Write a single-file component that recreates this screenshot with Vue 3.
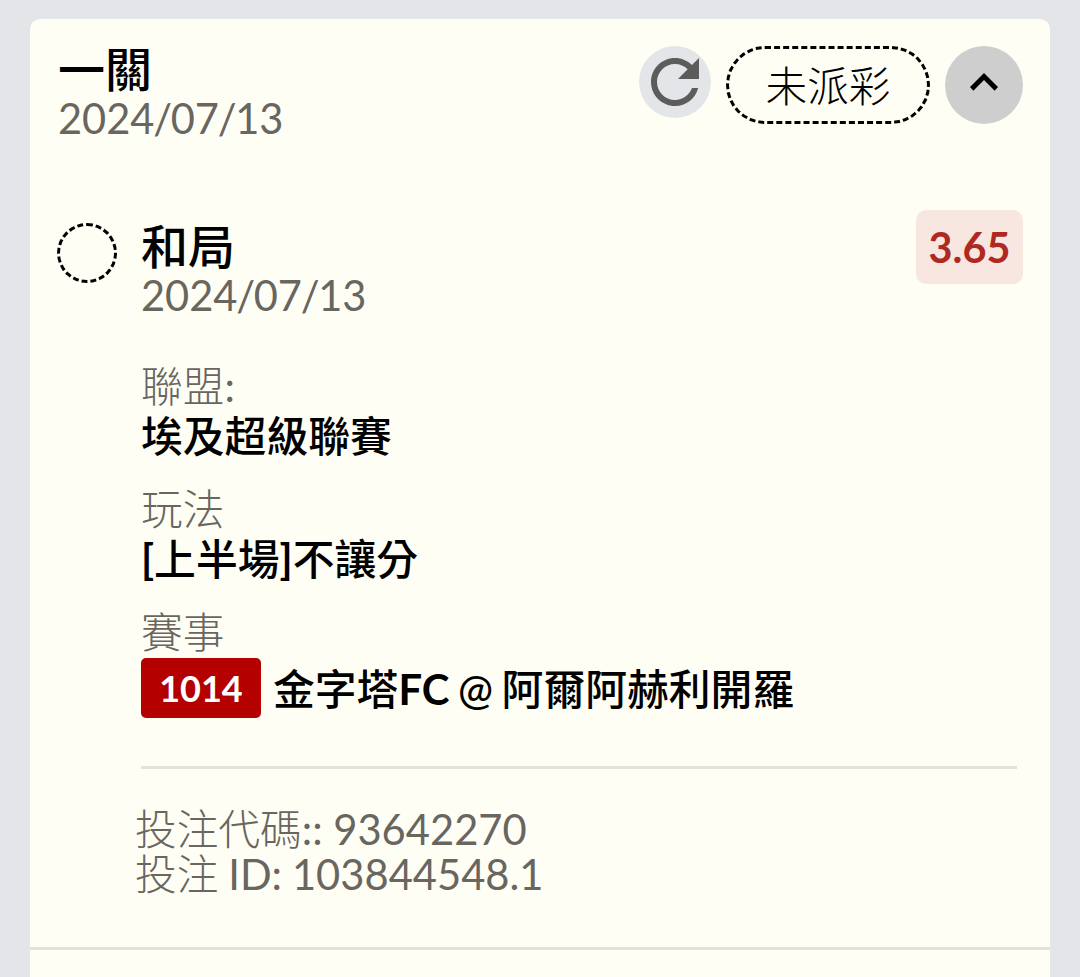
<template>
  <div class="page">
    <div class="card">
      <header class="top">
        <div>
          <h1 class="title">一關</h1>
          <p class="date">
            <span v-for="(part, index) in date" :key="index">{{ part }}</span>
          </p>
        </div>
        <div class="actions">
          <button class="refresh">
            <svg viewBox="0 0 24 24">
              <path
                d="M17.65 6.35C16.2 4.9 14.21 4 12 4c-4.42 0-7.99 3.58-7.99 8s3.57 8 7.99 8c3.73 0 6.84-2.55 7.73-6h-2.08c-.82 2.33-3.04 4-5.65 4-3.31 0-6-2.69-6-6s2.69-6 6-6c1.66 0 3.14.69 4.22 1.78L13 11h7V4l-2.35 2.35z"
                fill="#5c5c5d"
              />
            </svg>
          </button>
          <div class="status">未派彩</div>
          <button class="toggle">
            <svg viewBox="0 0 78 78">
              <path d="M39 27L25 41L28.3 44.8L39 34.1L49.7 44.8L53 41Z" />
            </svg>
          </button>
        </div>
      </header>

      <section class="bet">
        <div class="circle"></div>
        <div class="content">
          <div class="head">
            <div>
              <h2 class="title">和局</h2>
              <p class="date">
                <span v-for="(part, index) in date" :key="index">{{ part }}</span>
              </p>
            </div>
            <span class="odds">3.65</span>
          </div>
          <div class="row">
            <p class="label">聯盟<span>:</span></p>
            <p class="value">埃及超級聯賽</p>
          </div>
          <div class="row">
            <p class="label">玩法</p>
            <p class="value"><b>[</b>上半場<b>]</b>不讓分</p>
          </div>
          <div class="row">
            <p class="label">賽事</p>
            <div class="match">
              <span class="number">1014</span>
              <span class="teams">金字塔<b>FC</b> @ 阿爾阿赫利開羅</span>
            </div>
          </div>
          <div class="codes">
            <p>投注代碼<span>:: 93642270</span></p>
            <p class="bet-id">投注<span> ID: 103844548.1</span></p>
          </div>
        </div>
      </section>
    </div>
  </div>
</template>

<script setup>
import { ref } from "vue";

const date = ref(["2024", "/", "07", "/", "13"]);
</script>

<style>
body {
  margin: 0;
  background: #e4e5e8;
}
</style>

<style scoped>
.page {
  height: 977px;
  padding: 18.5px 30px 0;
  box-sizing: border-box;
  overflow: hidden;
  background: #e4e5e8;
  font-family: Lato, "Noto Sans CJK TC", sans-serif;
  color: #000;
}

.card {
  height: 980px;
  background: #fffef5;
  border-radius: 10px 10px 0 0;
}

h1,
h2,
p {
  margin: 0;
}

button {
  padding: 0;
  border: 0;
  border-radius: 50%;
}

svg {
  display: block;
}

.top {
  display: flex;
  justify-content: space-between;
  height: 191px;
  padding: 27px 27px 0 28px;
  box-sizing: border-box;
}

.title {
  margin-top: -2px;
  font-size: 47px;
  line-height: 50px;
  font-weight: 500;
}

.date {
  font-size: 41.6px;
  line-height: 49px;
  color: #68665f;
}

/* the slashes sit tight against the digits */
.date span:nth-child(even) {
  margin: 0 -1.3px;
}

.actions {
  display: flex;
  align-items: flex-start;
}

.refresh {
  width: 72px;
  height: 72px;
  margin-right: 15px;
  background: #e4e5e8;
}

.status {
  width: 204px;
  height: 78px;
  margin-right: 15px;
  box-sizing: border-box;
  border: 3px dashed #000;
  border-radius: 39px;
  text-align: center;
  font-size: 41.7px;
  line-height: 75px;
  font-weight: 300;
}

.toggle {
  width: 78px;
  height: 78px;
  background: #cecece;
}

.bet {
  display: flex;
  height: 737.5px;
  padding: 0 27px;
  border-bottom: 3px solid #e4e2dc;
}

.circle {
  width: 60px;
  height: 60px;
  margin: 13px 24px 0 0;
  box-sizing: border-box;
  border: 3px dashed #000;
  border-radius: 50%;
}

.content {
  flex: 1;
}

.head {
  display: flex;
  justify-content: space-between;
  height: 152px;
}

.head .title {
  margin-top: 11px;
}

.odds {
  width: 107px;
  height: 74px;
  border-radius: 10px;
  background: #f7e7e0;
  color: #ad2922;
  font-size: 41.4px;
  line-height: 75px;
  font-weight: 700;
  text-align: center;
}

.row {
  height: 123px;
}

.label {
  font-size: 41.7px;
  line-height: 49px;
  font-weight: 300;
  color: #68665f;
}

.value,
.teams {
  font-size: 41.8px;
  line-height: 50px;
  font-weight: 500;
}

.teams {
  padding-top: 2px;
  word-spacing: -2px;
}

.match {
  display: flex;
  align-items: center;
  height: 60px;
  margin-top: 1px;
  white-space: nowrap;
}

.number {
  width: 120px;
  height: 60px;
  margin-right: 12px;
  border-radius: 5px;
  background: #b50000;
  color: #fff;
  font-size: 36px;
  line-height: 61px;
  font-weight: 700;
  text-align: center;
}

.codes {
  margin: 35px 6px 0 0;
  padding-top: 38px;
  border-top: 3px solid #e4e2dc;
  font-size: 41.7px;
  line-height: 45.5px;
  font-weight: 300;
  color: #68665f;
}

.codes p {
  margin-left: -6px;
}

.label span,
.codes span {
  font-weight: 400;
}

.bet-id {
  word-spacing: -0.8px;
}
</style>
